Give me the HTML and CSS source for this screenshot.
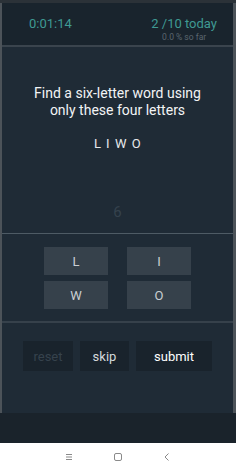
FILE: index.html
```html
<!DOCTYPE html>
<html lang="en">
<head>
    <meta charset="UTF-8">
    <meta name="viewport" content="width=device-width, initial-scale=1.0">
    <title>Six Letters</title>
    <link rel="stylesheet" href="styles.css">
</head>
<body>
    <div class="status"></div>
    <div class="app">
        <div class="header">
            <span class="timer">0:01:14</span>
            <div class="score">
                <span class="today">2 /10 today</span>
                <span class="sofar">0.0 % so far</span>
            </div>
        </div>
        <div class="main">
            <div class="prompt">
                <p class="question">Find a six-letter word using<br>only these four letters</p>
                <p class="letters">L I W O</p>
                <p class="count">6</p>
            </div>
            <div class="keys">
                <span class="key">L</span>
                <span class="key">I</span>
                <span class="key">W</span>
                <span class="key">O</span>
            </div>
            <div class="actions">
                <span class="btn reset">reset</span>
                <span class="btn skip">skip</span>
                <span class="btn submit">submit</span>
            </div>
        </div>
    </div>
    <div class="bottom"></div>
    <div class="nav">
        <svg width="10" height="10" viewBox="0 0 10 10"><path d="M2 2.5h6M2 5h6M2 7.5h6" stroke="#8a8a8a" stroke-width="1" fill="none"/></svg>
        <svg width="10" height="10" viewBox="0 0 10 10"><rect x="1.5" y="1.5" width="7" height="7" rx="1.5" stroke="#8a8a8a" stroke-width="1" fill="none"/></svg>
        <svg width="10" height="10" viewBox="0 0 10 10"><path d="M6.5 1.5L3 5l3.5 3.5" stroke="#8a8a8a" stroke-width="1" fill="none"/></svg>
    </div>
</body>
</html>
```

FILE: styles.css
```css
*{margin:0; padding:0; box-sizing:border-box;}
body{width:236px; height:472px; overflow:hidden; font-family:Roboto, "Noto Sans", sans-serif; background:#1a232b;}
.status{height:3px; background:#2b3238;}
.app{height:410px; display:flex; flex-direction:column; border-left:2px solid #4c5359; border-right:3px solid #4c5359; background:#1f2b36;}
.header{height:44px; display:flex; justify-content:space-between; align-items:flex-start; padding:13px 16px 0 27px; background:#19242d; border-bottom:2px solid #3a444d;}
.timer{font-size:13px; line-height:16px; color:#3f9a93;}
.score{display:flex; flex-direction:column; align-items:center;}
.today{font-size:13px; line-height:16px; color:#3f9a93;}
.sofar{font-size:8.5px; line-height:11px; color:#5b666f;}
.main{flex:1; display:flex; flex-direction:column;}
.prompt{height:187px; display:flex; flex-direction:column; align-items:center; padding-top:38px; border-bottom:1px solid #4e5b65;}
.question{font-size:14px; line-height:17px; color:#f2f4f5; text-align:center;}
.letters{margin-top:17px; font-size:13px; line-height:16px; letter-spacing:0.5px; word-spacing:1px; color:#e6e9eb;}
.count{margin-top:51px; font-size:15px; line-height:18px; color:#35424d;}
.keys{display:grid; grid-template-columns:64px 64px; grid-auto-rows:28px; gap:6px 19px; justify-content:center; padding:13px 0 12px; border-bottom:2px solid #36414b;}
.key{display:flex; align-items:center; justify-content:center; background:#36414b; color:#c9cfd3; font-size:13px;}
.actions{display:flex; justify-content:center; gap:7px; padding-top:18px;}
.btn{height:30px; display:flex; align-items:center; justify-content:center; background:#19232c; font-size:13px;}
.reset{width:50px; color:#36424c;}
.skip{width:49px; color:#d4d9dc;}
.submit{width:76px; color:#ffffff;}
.bottom{height:30px; background:#1a232b;}
.nav{height:29px; background:#ffffff; display:flex; justify-content:center; align-items:center; gap:39px; padding-bottom:1px;}
```
